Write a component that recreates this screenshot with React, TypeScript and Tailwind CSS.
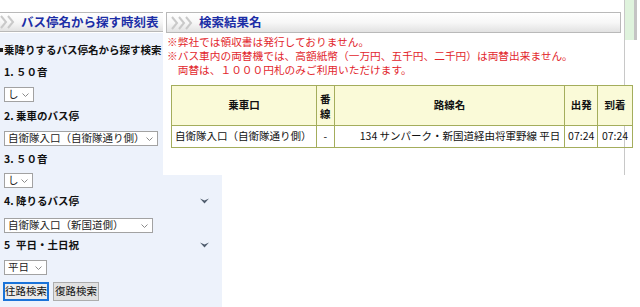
import React from 'react';

const Chevrons = () => (
  <svg width="22" height="14" viewBox="0 0 22 14" className="shrink-0">
    <polyline points="1,1 6,7 1,13" fill="none" stroke="#c9c9c9" strokeWidth="2" />
    <polyline points="8,1 13,7 8,13" fill="none" stroke="#c9c9c9" strokeWidth="2" />
    <polyline points="15,1 20,7 15,13" fill="none" stroke="#c9c9c9" strokeWidth="2" />
  </svg>
);

const TitleBar = ({ title, className }: { title: string; className: string }) => (
  <div className={`flex items-center h-[20px] border border-[#b9b9b9] bg-linear-to-b from-white via-[#f7f7f7] to-[#e2e2e2] ${className}`}>
    <Chevrons />
    <span className="ml-[6px] text-[12.5px] font-bold leading-none text-[#1c2ea6]">{title}</span>
  </div>
);

const Sel = ({ text, className }: { text: string; className: string }) => (
  <div className={`flex items-center h-[15px] border border-[#a2a2a2] bg-white pl-[3px] pr-[4px] text-[10.5px] leading-none text-[#222] ${className}`}>
    <span className="flex-1 whitespace-nowrap">{text}</span>
    <svg width="7" height="4" viewBox="0 0 7 4">
      <polyline points="0.5,0.5 3.5,3.5 6.5,0.5" fill="none" stroke="#8a8a8a" strokeWidth="1" />
    </svg>
  </div>
);

const Heading = ({ num, text, className, arrow }: { num: string; text: string; className: string; arrow?: boolean }) => (
  <div className={`flex items-center h-[12px] text-[10.5px] font-bold leading-none text-[#111] ${className}`}>
    <span className="w-[16px] pl-[4px]">{num}</span>
    <span className="flex-1">{text}</span>
    {arrow && (
      <svg width="9" height="6" viewBox="0 0 9 6" className="mr-[13px]">
        <path d="M0 0.5 L4.5 5.5 L9 0.5 L4.5 2.5 Z" fill="#4f5c6c" />
      </svg>
    )}
  </div>
);

export default function App() {
  return (
    <div className="relative w-[640px] h-[307px] overflow-hidden bg-white font-['Noto_Sans_CJK_JP',sans-serif]">
      {/* left search sidebar */}
      <div className="w-[222px] h-full flex flex-col">
        <div className="h-[33px] pt-[12px] bg-white">
          <TitleBar title="バス停名から探す時刻表" className="w-[230px] -ml-[8px]" />
        </div>
        <div className="flex-1 bg-[#edf2fb]">
          <div className="mt-[11px] flex items-center h-[12px] text-[10.5px] font-bold leading-none text-[#111] whitespace-nowrap">
            <span className="w-[3px] h-[4px] bg-[#222] mr-[1px]"></span>乗降りするバス停名から探す検索
          </div>
          <Heading num="1." text="５０音" className="mt-[10px]" arrow />
          <Sel text="し" className="mt-[9px] ml-[4px] w-[30px]" />
          <Heading num="2." text="乗車のバス停" className="mt-[8px]" arrow />
          <Sel text="自衛隊入口（自衛隊通り側）" className="mt-[9px] ml-[4px] w-[154px]" />
          <Heading num="3." text="５０音" className="mt-[7px]" arrow />
          <Sel text="し" className="mt-[8px] ml-[4px] w-[29px]" />
          <Heading num="4." text="降りるバス停" className="mt-[7px]" arrow />
          <Sel text="自衛隊入口（新国道側）" className="mt-[11px] ml-[4px] w-[149px]" />
          <Heading num="5" text="平日・土日祝" className="mt-[6px]" arrow />
          <Sel text="平日" className="mt-[9px] ml-[4px] w-[43px]" />
          <div className="mt-[7px] ml-[3px] flex gap-[4px] text-[10.5px] leading-none text-[#111]">
            <button className="h-[19px] w-[46px] border-2 border-[#1a73d9] bg-[#ececec]">往路検索</button>
            <button className="h-[19px] w-[46px] border border-[#adadad] bg-[#e1e1e1]">復路検索</button>
          </div>
        </div>
      </div>

      {/* result frame lying over the sidebar */}
      <div className="absolute left-[163px] top-0 w-[477px] h-[175px] bg-white">
        <div className="absolute left-[461px] top-0 w-px h-full bg-[#c8c8c8]"></div>
        <div className="absolute left-[462px] top-0 w-[9px] h-[40px] bg-[#dff3dd]"></div>
        <div className="absolute left-[471px] top-0 w-[3px] h-[40px] bg-[#c4c4c4]"></div>
        <div className="relative pt-[12px] pl-[3px]">
          <TitleBar title="検索結果名" className="w-[455px] h-[21px] pl-[4px]" />
          <div className="mt-[2px] pl-[1px] text-[10.7px] leading-[14px] text-[#e2262c] whitespace-nowrap">
            <div>※弊社では領収書は発行しておりません。</div>
            <div>※バス車内の両替機では、高額紙幣（一万円、五千円、二千円）は両替出来ません。</div>
            <div>　両替は、１０００円札のみご利用いただけます。</div>
          </div>
          <table className="mt-[8px] ml-[5px] w-[462px] border-collapse text-[10.5px] leading-none text-[#111]">
            <thead>
              <tr className="h-[40px] bg-[#fafad8] font-bold">
                <th className="w-[145px] border border-[#a4ad5c]">乗車口</th>
                <th className="w-[18px] border border-[#a4ad5c] leading-[15px]">
                  <div>番</div>
                  <div>線</div>
                </th>
                <th className="w-[231px] border border-[#a4ad5c]">路線名</th>
                <th className="w-[33px] border border-[#a4ad5c]">出発</th>
                <th className="w-[35px] border border-[#a4ad5c]">到着</th>
              </tr>
            </thead>
            <tbody>
              <tr className="h-[22px]">
                <td className="border border-[#a4ad5c] pl-[3px] whitespace-nowrap">自衛隊入口（自衛隊通り側）</td>
                <td className="border border-[#a4ad5c] text-center">-</td>
                <td className="border border-[#a4ad5c] text-right pr-[4px] whitespace-nowrap">134 サンパーク・新国道経由将軍野線 平日</td>
                <td className="border border-[#a4ad5c] text-center">07:24</td>
                <td className="border border-[#a4ad5c] text-center">07:24</td>
              </tr>
            </tbody>
          </table>
        </div>
      </div>
    </div>
  );
}
